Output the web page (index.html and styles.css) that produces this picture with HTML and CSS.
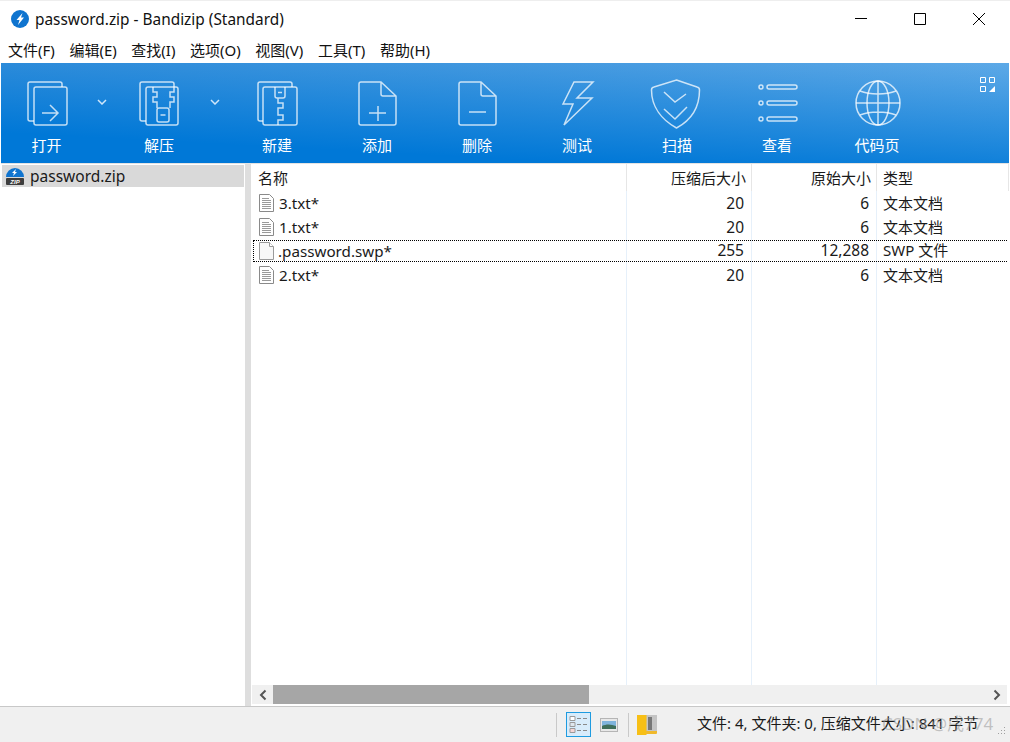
FILE: index.html
```html
<!DOCTYPE html>
<html lang="zh">
<head>
  <meta charset="UTF-8">
  <title>password.zip - Bandizip (Standard)</title>
  <link rel="stylesheet" href="styles.css">
</head>
<body>
<svg class="defs">
  <symbol id="txt" viewBox="0 0 15 18">
    <path d="M.5.5h10l4 4v13H.5z" fill="#fff" stroke="#8a8a8a"/>
    <path d="M3 4.500h7M3 6.500h9M3 8.500h9M3 10.500h9M3 12.500h9M3 14.500h9" stroke="#9a9a9a"/>
  </symbol>
</svg>
<div class="window">
  <div class="titlebar">
    <svg class="app-icon" viewBox="0 0 18 18">
      <circle cx="9" cy="9" r="9" fill="#0f74cf"/>
      <path d="M11.500 3 5.500 10h3l-1.500 5 6-7.500h-3z" fill="#fff"/>
    </svg>
    <span class="title">password.zip - Bandizip (Standard)</span>
    <div class="win-btns">
      <svg viewBox="0 0 14 14"><path d="M1 6.500h12" stroke="#000"/></svg>
      <svg viewBox="0 0 14 14"><path d="M1.500 1.500h11v11h-11z" fill="none" stroke="#000"/></svg>
      <svg viewBox="0 0 14 14"><path d="M1 1l12 12M13 1 1 13" stroke="#000"/></svg>
    </div>
  </div>
  <div class="menubar">
    <span>文件(F)</span><span>编辑(E)</span><span>查找(I)</span><span>选项(O)</span><span>视图(V)</span><span>工具(T)</span><span>帮助(H)</span>
  </div>
  <div class="toolbar">
    <div class="tool tool-open">
      <svg viewBox="0 0 48 48"><path d="M11 41H7a2 2 0 0 1-2-2V4a2 2 0 0 1 2-2h30a2 2 0 0 1 2 2v3"/><rect x="11" y="7" width="33" height="38" rx="2"/><path d="M19 33h16M27 25l8 8-8 8"/></svg>
      <span>打开</span>
    </div>
    <div class="caret caret-a"><svg viewBox="0 0 10 6"><path d="M1 1l4 4 4-4"/></svg></div>
    <div class="tool tool-extract">
      <svg viewBox="0 0 48 48"><path d="M11 41H7a2 2 0 0 1-2-2V4a2 2 0 0 1 2-2h30a2 2 0 0 1 2 2v3"/><rect x="11" y="7" width="32" height="38" rx="2"/><path d="M18 7v5h4v5h-4v5h4v6M39 7v5h-4v5h4v5h-4v6"/><rect x="22" y="28" width="12" height="14" rx="2"/><path d="M25.500 35h5"/></svg>
      <span>解压</span>
    </div>
    <div class="caret caret-b"><svg viewBox="0 0 10 6"><path d="M1 1l4 4 4-4"/></svg></div>
    <div class="tool tool-new">
      <svg viewBox="0 0 48 48"><path d="M10 41H7a2 2 0 0 1-2-2V4a2 2 0 0 1 2-2h30a2 2 0 0 1 2 2v3"/><rect x="10" y="7" width="34" height="38" rx="2"/><path d="M22 7v9a2 2 0 0 0 2 2h6a2 2 0 0 0 2-2V7M25 12.500h4M25 18v5h5v5h-5v7h5v5h-5v5"/></svg>
      <span>新建</span>
    </div>
    <div class="tool">
      <svg viewBox="0 0 48 48"><path d="M28 2H8a2 2 0 0 0-2 2v39a2 2 0 0 0 2 2h33a2 2 0 0 0 2-2V16zM28 2v12a2 2 0 0 0 2 2h13M25 26v15M16 33h17"/></svg>
      <span>添加</span>
    </div>
    <div class="tool">
      <svg viewBox="0 0 48 48"><path d="M28 2H8a2 2 0 0 0-2 2v39a2 2 0 0 0 2 2h33a2 2 0 0 0 2-2V16zM28 2v12a2 2 0 0 0 2 2h13M16 32h17"/></svg>
      <span>删除</span>
    </div>
    <div class="tool">
      <svg viewBox="0 0 48 48"><path d="M21 2h19L24 18h15L11 45l9-21H10z"/></svg>
      <span>测试</span>
    </div>
    <div class="tool">
      <svg viewBox="0 0 48 48"><path d="M23.500 0 44 7a3 3 0 0 1 2.500 3c0 17-8 30-23 38C9 40-1.500 27-1.500 10A3 3 0 0 1 1 7zM11 12l11 10 11-8M11 29l11 10 12-12"/></svg>
      <span>扫描</span>
    </div>
    <div class="tool">
      <svg viewBox="0 0 48 48"><circle cx="8" cy="7" r="2"/><circle cx="8" cy="23" r="2"/><circle cx="8" cy="39" r="2"/><rect x="14" y="5" width="30" height="4" rx="2"/><rect x="14" y="21" width="30" height="4" rx="2"/><rect x="14" y="37" width="30" height="4" rx="2"/></svg>
      <span>查看</span>
    </div>
    <div class="tool">
      <svg viewBox="0 0 48 48"><circle cx="25" cy="23" r="22"/><ellipse cx="25" cy="23" rx="11" ry="22"/><path d="M25 1v44M3 23h44M7 11c10 4 26 4 36 0M7 35c10-4 26-4 36 0"/></svg>
      <span>代码页</span>
    </div>
    <svg class="layout-icon" viewBox="0 0 16 16"><path d="M.5.5h5v5h-5zM9.500.5h5v5h-5zM.5 9.500h5v5h-5z" fill="none" stroke="#fff"/><path d="M15 9v6H9z" fill="#fff"/></svg>
  </div>
  <div class="main">
    <div class="tree">
      <div class="tree-item">
        <svg class="zip-icon" viewBox="0 0 20 20">
          <path d="M1 11a9 9 0 0 1 18 0z" fill="#0f74cf"/>
          <path d="M11 3 7 7h2L8 10l4-4h-2z" fill="#fff"/>
          <rect x="1" y="12" width="18" height="7" rx="1" fill="#3d3d3d"/>
          <text x="10" y="18" class="zip-label">ZIP</text>
        </svg>
        password.zip
      </div>
    </div>
    <div class="splitter"></div>
    <div class="list">
      <div class="row list-head">
        <div>名称</div><div class="num">压缩后大小</div><div class="num">原始大小</div><div>类型</div>
      </div>
      <div class="list-body">
        <div class="row">
          <div class="name"><svg class="file-icon"><use href="#txt"/></svg>3.txt*</div><div class="num">20</div><div class="num">6</div><div>文本文档</div>
        </div>
        <div class="row">
          <div class="name"><svg class="file-icon"><use href="#txt"/></svg>1.txt*</div><div class="num">20</div><div class="num">6</div><div>文本文档</div>
        </div>
        <div class="row row-focus">
          <div class="name">
            <svg class="file-icon" viewBox="0 0 15 18"><path d="M.5.5h10l4 4v13H.5z" fill="#f7f7f7" stroke="#9a9a9a"/><path d="M10.500.5v4h4" fill="#fff" stroke="#9a9a9a"/></svg>.password.swp*
          </div>
          <div class="num">255</div><div class="num">12,288</div><div>SWP 文件</div>
        </div>
        <div class="row">
          <div class="name"><svg class="file-icon"><use href="#txt"/></svg>2.txt*</div><div class="num">20</div><div class="num">6</div><div>文本文档</div>
        </div>
      </div>
      <div class="hscroll">
        <div class="arrow"><svg viewBox="0 0 8 12"><path d="M6.500 1.500 2 6l4.500 4.500"/></svg></div>
        <div class="thumb"></div>
        <div class="track"></div>
        <div class="arrow"><svg viewBox="0 0 8 12"><path d="M1.500 1.500 6 6l-4.500 4.500"/></svg></div>
      </div>
    </div>
  </div>
  <div class="statusbar">
    <div class="sep"></div>
    <div class="view-btn">
      <svg viewBox="0 0 21 20">
        <path d="M2 2h5v4H2z" fill="#fff" stroke="#9a9a9a"/><path d="M2 8h5v4H2z" fill="#dfe7ee" stroke="#9a9a9a"/><path d="M2 14h5v4H2z" fill="#f6d5d5" stroke="#9a9a9a"/>
        <path d="M9 4h4M15 4h4M9 10h4M15 10h4M9 16h4M15 16h4" stroke="#8a8a8a"/>
      </svg>
    </div>
    <svg class="preview-icon" viewBox="0 0 18 14">
      <rect x=".5" y=".5" width="17" height="13" fill="#e8e8e8" stroke="#b5b5b5"/>
      <rect x="2" y="3" width="14" height="8" fill="#7fb4dc"/>
      <path d="M2 8c4-2 9-2 14 0v3H2z" fill="#3f6f5a"/>
    </svg>
    <div class="sep sep-b"></div>
    <svg class="archive-icon" viewBox="0 0 21 21">
      <path d="M9 1h11v17H9z" fill="#c4c4c4"/>
      <path d="M0 1h9.500v20H0z" fill="#f7bf16"/>
      <path d="M9 17h11v2c0 1-1 1-2 1H9z" fill="#f0b92c"/>
      <path d="M11 3h4v13h-4z" fill="#777"/>
    </svg>
    <div class="status-text">文件: 4, 文件夹: 0, 压缩文件大小: 841 字节</div>
    <div class="watermark">CSDN @戌774</div>
    <svg class="grip" viewBox="0 0 10 10"><path d="M8 1h1v1H8zM5 4h1v1H5zM8 4h1v1H8zM2 7h1v1H2zM5 7h1v1H5zM8 7h1v1H8z" fill="#a0a0a0"/></svg>
  </div>
</div>
</body>
</html>
```

FILE: styles.css
```css
* {
  box-sizing: border-box;
}

body {
  margin: 0;
  font-family: "Noto Sans", "Noto Sans CJK SC", sans-serif;
  font-size: 15px;
  color: #1a1a1a;
  background: #fff;
  overflow: hidden;
}

.defs {
  display: none;
}

.window {
  width: 1010px;
  height: 742px;
  display: flex;
  flex-direction: column;
  padding: 0 1px;
  border-top: 1px solid #eee;
}

.titlebar {
  height: 36px;
  display: flex;
  align-items: center;
  padding-left: 10px;
  flex: none;
}

.app-icon {
  width: 18px;
  height: 18px;
  margin-right: 6px;
}

.title {
  font-size: 15.400px;
  color: #111;
}

.win-btns {
  margin-left: auto;
  display: flex;
  gap: 45px;
  padding-right: 23px;
}

.win-btns svg {
  width: 14px;
  height: 14px;
}

.menubar {
  height: 26px;
  display: flex;
  align-items: center;
  gap: 14.600px;
  padding: 0 0 2px 7px;
  flex: none;
  color: #111;
}

.toolbar {
  height: 100px;
  flex: none;
  display: flex;
  color: #fff;
  background: linear-gradient(183deg, rgba(0, 120, 215, 0) 0, #0078d7 80%), linear-gradient(90deg, #4c99dc, #5da9e7);
}

.tool {
  width: 100px;
  flex: none;
  display: flex;
  flex-direction: column;
  align-items: center;
  padding-top: 17px;
}

.tool svg {
  width: 48px;
  height: 48px;
  overflow: visible;
  fill: none;
  stroke: rgba(255, 255, 255, 0.75);
  stroke-width: 1.500;
}

.tool span {
  margin-top: 5px;
  line-height: 24px;
}

.tool-open {
  width: 91px;
}

.tool-extract {
  width: 94px;
}

.tool-new {
  margin-left: 3px;
}

.caret {
  width: 20px;
  flex: none;
  padding-top: 36px;
  display: flex;
  justify-content: center;
}

.caret-b {
  width: 18px;
}

.caret svg {
  width: 10px;
  height: 6px;
  fill: none;
  stroke: #cfe6fa;
  stroke-width: 1.500;
}

.layout-icon {
  width: 16px;
  height: 16px;
  margin: 14px 13px 0 auto;
}

.main {
  height: 543px;
  flex: none;
  display: flex;
  border-top: 1px solid #e3e3e3;
}

.tree {
  width: 244px;
  padding: 1px 1px 0 1px;
  flex: none;
}

.tree-item {
  height: 22px;
  display: flex;
  align-items: center;
  background: #d9d9d9;
  padding-left: 3px;
  font-size: 15.500px;
}

.zip-icon {
  width: 20px;
  height: 20px;
  margin-right: 5px;
}

.zip-label {
  font: italic bold 6px "Liberation Sans", sans-serif;
  fill: #fff;
  text-anchor: middle;
}

.splitter {
  width: 6px;
  flex: none;
  background: #dedede;
}

.list {
  flex: 1;
  display: flex;
  flex-direction: column;
  min-width: 0;
}

.row {
  height: 24px;
  display: grid;
  grid-template-columns: 376px 125px 125px 1fr;
  align-items: center;
}

.row > div {
  padding: 0 6px 1px;
  white-space: nowrap;
}

.row .num {
  text-align: right;
  padding-right: 8px;
  font-size: 15.500px;
}

.list-head {
  height: 27px;
  align-items: stretch;
  flex: none;
}

.list-head > div {
  display: flex;
  align-items: center;
  border-right: 1px solid #e6e6e6;
}

.list-head > div:first-child {
  padding-left: 7px;
}

.list-head .num {
  justify-content: flex-end;
  padding-right: 5px;
  font-size: 15px;
}

.list-body {
  flex: 1;
  background:
    linear-gradient(#e6f0fa, #e6f0fa) 375px 0 / 1px 100% no-repeat,
    linear-gradient(#e6f0fa, #e6f0fa) 500px 0 / 1px 100% no-repeat,
    linear-gradient(#e6f0fa, #e6f0fa) 625px 0 / 1px 100% no-repeat;
}

.row > .name {
  display: flex;
  align-items: center;
  padding-left: 8px;
  font-size: 15.200px;
}

.file-icon {
  width: 15px;
  height: 18px;
  margin-right: 5px;
  flex: none;
}

.row-focus {
  height: 22px;
  margin: 1px 2px;
  grid-template-columns: 373px 125px 125px 1fr;
  grid-template-rows: 20px;
  border: 1px dotted #000;
  border-right: 0;
}

.row-focus > div,
.row-focus .num {
  line-height: 16px;
  padding-bottom: 3px;
}

.row-focus > .name {
  padding-left: 5px;
  padding-bottom: 1px;
}

.row-focus .file-icon {
  margin-right: 4px;
}

.hscroll {
  height: 19px;
  margin: 0 2px 2px 1px;
  display: flex;
  flex: none;
  background: #f0f0f0;
}

.arrow {
  width: 21px;
  flex: none;
  display: flex;
  align-items: center;
  justify-content: center;
}

.arrow svg {
  width: 8px;
  height: 12px;
  fill: none;
  stroke: #555;
  stroke-width: 2;
}

.thumb {
  width: 316px;
  flex: none;
  background: #a6a6a6;
}

.track {
  flex: 1;
}

.statusbar {
  flex: 1;
  margin: 0 -1px;
  position: relative;
  display: flex;
  align-items: center;
  background: #f0f0f0;
  border-top: 1px solid #c8c8c8;
  padding-left: 556px;
}

.sep {
  width: 1px;
  height: 24px;
  background: #c9c9c9;
  flex: none;
}

.sep-b {
  margin-left: 10px;
}

.view-btn {
  width: 25px;
  height: 25px;
  margin-left: 9px;
  padding: 1px;
  flex: none;
  background: #d8ecfb;
  border: 1px solid #1e9be0;
}

.view-btn svg {
  display: block;
  width: 21px;
  height: 21px;
}

.preview-icon {
  width: 18px;
  height: 14px;
  margin-left: 9px;
  flex: none;
}

.archive-icon {
  width: 21px;
  height: 21px;
  margin-left: 8px;
  flex: none;
}

.status-text {
  margin-left: 39px;
  margin-bottom: 4px;
  white-space: nowrap;
}

.watermark {
  position: absolute;
  left: 882px;
  top: 3px;
  font-size: 17px;
  color: rgba(150, 150, 150, 0.55);
  white-space: nowrap;
}

.grip {
  position: absolute;
  right: 4px;
  bottom: 6px;
  width: 10px;
  height: 10px;
}
```
